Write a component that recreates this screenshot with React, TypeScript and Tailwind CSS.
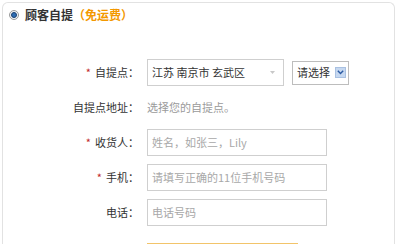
const font = { fontFamily: '"Noto Sans CJK SC", "Liberation Sans", sans-serif' };

const Star = () => <span className="text-[#c1272d] text-[11px] mr-[4px] leading-none">*</span>;

const Label = ({ text, required }: { text: string; required?: boolean }) => (
  <div className="w-[136px] shrink-0 flex items-center justify-end text-[11px] text-[#333]">
    {required && <Star />}
    <span>{text}</span>
  </div>
);

const TextInput = ({ placeholder }: { placeholder: string }) => (
  <div className="ml-[8px] w-[180px] h-[27px] border border-[#cfcfcf] flex items-center pl-[4px] text-[11px] text-[#a8a8a8]">
    {placeholder}
  </div>
);

export default function App() {
  return (
    <div className="w-[397px] h-[244px] overflow-hidden bg-white pt-[2px] pl-[2px]" style={font}>
      <div className="w-[393px] h-[270px] border-l border-r border-t border-[#e2e2e2] rounded-t-[6px]">
        {/* 标题 */}
        <div className="h-[24px] flex items-center pl-[6px]">
          <span className="w-[10px] h-[10px] rounded-full border border-[#9a9a9a] bg-[#eef2f6] flex items-center justify-center">
            <span className="w-[6px] h-[6px] rounded-full bg-[#2e6db4] border border-[#1a3f6e]" />
          </span>
          <span className="ml-[6px] text-[12px] font-bold text-[#333]">顾客自提</span>
          <span className="text-[12px] font-bold text-[#f39800]">（免运费）</span>
        </div>

        <div className="mt-[32px]">
          {/* 自提点 */}
          <div className="flex items-center h-[27px] mb-[8px]">
            <Label text="自提点：" required />
            <div className="ml-[8px] w-[137px] h-[27px] border border-[#cfcfcf] flex items-center justify-between pl-[4px] pr-[8px] text-[11px] text-[#333]">
              <span>江苏 南京市 玄武区</span>
              <svg width="5" height="3" viewBox="0 0 5 3">
                <path d="M0 0 L5 0 L2.5 3 Z" fill="#c8c8c8" />
              </svg>
            </div>
            <div className="ml-[8px] w-[57px] h-[24px] border border-[#bdbdbd] flex items-center justify-between pl-[4px] pr-[2px] text-[11px] text-[#333]">
              <span>请选择</span>
              <span className="w-[11px] h-[11px] bg-[#c6d8f0] border border-[#a9c1e2] flex items-center justify-center">
                <svg width="7" height="5" viewBox="0 0 7 5">
                  <path d="M0.8 0.8 L3.5 3.6 L6.2 0.8" fill="none" stroke="#2b5aa3" strokeWidth="1.4" />
                </svg>
              </span>
            </div>
          </div>

          {/* 自提点地址 */}
          <div className="flex items-center h-[27px] mb-[8px]">
            <Label text="自提点地址：" />
            <span className="ml-[8px] text-[11px] text-[#9a9a9a]">选择您的自提点。</span>
          </div>

          <div className="flex items-center h-[27px] mb-[8px]">
            <Label text="收货人：" required />
            <TextInput placeholder="姓名，如张三，Lily" />
          </div>

          <div className="flex items-center h-[27px] mb-[8px]">
            <Label text="手机：" required />
            <TextInput placeholder="请填写正确的11位手机号码" />
          </div>

          <div className="flex items-center h-[27px]">
            <Label text="电话：" />
            <TextInput placeholder="电话号码" />
          </div>

          {/* 提交按钮 */}
          <div className="mt-[17px] ml-[144px] w-[151px] h-[24px] border-t-2 border-[#f2c46a] bg-[#fff9e6]" />
        </div>
      </div>
    </div>
  );
}
